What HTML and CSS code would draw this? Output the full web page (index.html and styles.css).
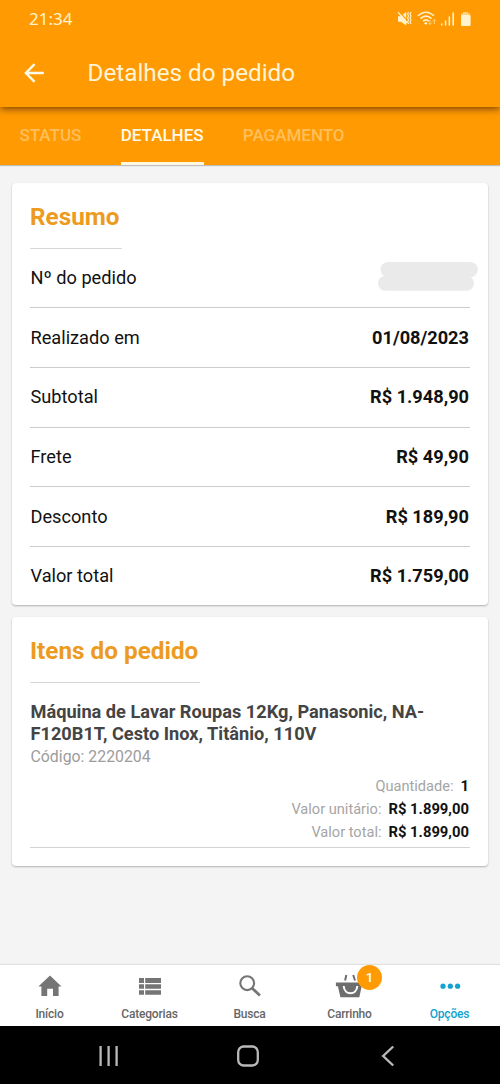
FILE: index.html
```html
<!DOCTYPE html>
<html lang="pt-BR">
<head>
<meta charset="utf-8">
<meta name="viewport" content="width=device-width, initial-scale=1">
<title>Detalhes do pedido</title>
<link rel="stylesheet" href="styles.css">
</head>
<body>
<div class="app">
  <header class="header">
    <div class="status">
      <span class="clock">21:34</span>
      <svg class="status-icons" width="76" height="18" viewBox="0 0 76 18">
        <g fill="#fff3cf">
          <path d="M2 6.2h2.5L10.2 2v13.5L5 11.8H2z"/>
          <path d="M3.4 1.6 11.4 10.6" stroke="#ff9a02" stroke-width="1.3"/>
          <path d="m2.2 2.4 9 10.6" stroke="#fff3cf" stroke-width="1.4"/>
          <path d="m12.6 2-1 2 1 2-1 2 1 2-1 2 1 2M15 2l-1 2 1 2-1 2 1 2-1 2 1 2" fill="none" stroke="#fff3cf" stroke-width="1.1"/>
          <path d="M22 5.8q8-7.2 16 0M24.5 8.6q5.5-5 11 0M27 11.2q3-2.7 6 0" fill="none" stroke="#fff3cf" stroke-width="1.5"/>
          <circle cx="29.8" cy="13.3" r="1.3"/>
          <path d="M34 10V14.5m-1.6-1.7L34 14.5l1.6-1.7M38.3 14V9.5m-1.6 1.7 1.6-1.7 1.6 1.7" fill="none" stroke="#ffd080" stroke-width="1"/>
          <path d="M45 13.5h1.5v2H45zM48.8 10.5h1.5v5h-1.5zM52.6 6.5h1.5v9h-1.5zM56.4 2.5h1.6v13h-1.6z"/>
          <path d="M67 2h5v1.5h2v2h-9v-2h2z" fill="#ffd27d"/>
          <rect x="65" y="5" width="9.6" height="11" rx="1.2"/>
        </g>
      </svg>
    </div>
    <div class="titlebar">
      <svg class="back" width="22" height="20" viewBox="0 0 22 20"><path d="M19.8 10H2.5M10.6 1.2 1.9 10l8.7 8.8" fill="none" stroke="#fffbea" stroke-width="2.4"/></svg>
      <h1 class="title">Detalhes do pedido</h1>
    </div>
  </header>
  <nav class="tabs">
    <span class="tab">STATUS</span>
    <span class="tab tab-active">DETALHES</span>
    <span class="tab">PAGAMENTO</span>
  </nav>

  <main class="content">
    <section class="card summary">
      <h2 class="heading">Resumo</h2>
      <div class="row"><span>Nº do pedido</span>
        <svg class="redacted" width="100" height="30" viewBox="0 0 100 30"><g fill="#eaeaea"><rect x="2.5" y="0" width="97.3" height="15.2" rx="7.6"/><rect x="0" y="13.8" width="96" height="15" rx="7.5"/><path d="M7 7h85v15H7z"/></g></svg>
      </div>
      <div class="row"><span>Realizado em</span><b>01/08/2023</b></div>
      <div class="row"><span>Subtotal</span><b>R$ 1.948,90</b></div>
      <div class="row"><span>Frete</span><b>R$ 49,90</b></div>
      <div class="row"><span>Desconto</span><b>R$ 189,90</b></div>
      <div class="row"><span>Valor total</span><b>R$ 1.759,00</b></div>
    </section>

    <section class="card items">
      <h2 class="heading">Itens do pedido</h2>
      <article class="item">
        <h3 class="item-name">Máquina de Lavar Roupas 12Kg, Panasonic, NA-F120B1T, Cesto Inox, Titânio, 110V</h3>
        <p class="code">Código: 2220204</p>
        <dl class="amounts">
          <div class="amount"><dt>Quantidade:</dt><dd>1</dd></div>
          <div class="amount"><dt>Valor unitário:</dt><dd>R$ 1.899,00</dd></div>
          <div class="amount"><dt>Valor total:</dt><dd>R$ 1.899,00</dd></div>
        </dl>
      </article>
    </section>
  </main>

  <nav class="bottom">
    <a class="link">
      <svg width="32" height="28" viewBox="0 0 32 28"><path d="M16 3.5 27.5 14.6H24.6V24H19V16.8H13.2V24H7.4V14.6H4.4z" fill="#757575"/></svg>
      <span>Início</span>
    </a>
    <a class="link">
      <svg width="32" height="28" viewBox="0 0 32 28"><path d="M5 6h5v5H5zM11.2 6H27v5H11.2zM5 12.2h5v4.6H5zM11.2 12.2H27v4.6H11.2zM5 18.2h5v4.6H5zM11.2 18.2H27v4.6H11.2z" fill="#757575"/></svg>
      <span>Categorias</span>
    </a>
    <a class="link">
      <svg width="32" height="28" viewBox="0 0 32 28"><g fill="none" stroke="#757575"><circle cx="13.2" cy="11.2" r="6.9" stroke-width="2.1"/><path d="m18.2 16.2 7.7 7.4" stroke-width="2.8"/></g></svg>
      <span>Busca</span>
    </a>
    <a class="link cart">
      <svg width="32" height="28" viewBox="0 0 32 28"><path d="M1.9 10.6h27v3.6h-1.2l-2.4 11H6.4l-2.5-11h-2z" fill="#6e6e6e"/><path d="M12.3 3 11.1 8.5M19.2 3l1.8 5.5" stroke="#6e6e6e" stroke-width="2"/><path d="M9.7 14c.7 9.7 12.9 9.7 13.6 0" fill="none" stroke="#fff" stroke-width="2.1"/></svg>
      <i class="badge">1</i>
      <span>Carrinho</span>
    </a>
    <a class="link link-active">
      <svg width="32" height="28" viewBox="0 0 32 28"><g fill="#12a3cf"><circle cx="9" cy="14.2" r="2.6"/><circle cx="16.3" cy="14.2" r="2.6"/><circle cx="23.6" cy="14.2" r="2.6"/></g></svg>
      <span>Opções</span>
    </a>
  </nav>

  <footer class="system">
    <svg width="22" height="22" viewBox="0 0 22 22"><path d="M2.6 1v20M10.6 1v20M18.6 1v20" stroke="#b9b9b9" stroke-width="2.3"/></svg>
    <svg width="22" height="22" viewBox="0 0 22 22"><rect x="1.2" y="1.5" width="19.6" height="19" rx="5.5" fill="none" stroke="#b9b9b9" stroke-width="2.3"/></svg>
    <svg width="14" height="22" viewBox="0 0 14 22"><path d="M12.2 1.5 2.2 11l10 9.5" fill="none" stroke="#b9b9b9" stroke-width="2.4"/></svg>
  </footer>
</div>
</body>
</html>
```
FILE: styles.css
```css
* { box-sizing: border-box; margin: 0; padding: 0; }
body { background: #f4f4f4; font-family: Roboto, "Liberation Sans", sans-serif; color: #111; }
svg { display: block; flex: none; }
.app { width: 500px; height: 1084px; display: flex; flex-direction: column; overflow: hidden; }

.header { height: 107px; flex: none; background: #ff9a02; box-shadow: 0 2px 7px rgba(80, 40, 0, .75); position: relative; z-index: 1; }
.status { height: 38px; padding: 0 28px 2px 29px; display: flex; align-items: center; justify-content: space-between; }
.clock { font-family: "Noto Sans", Roboto, sans-serif; font-size: 17px; color: #fff3cf; }
.status-icons { margin-top: 2px; }
.titlebar { height: 69px; padding: 0 24px; display: flex; align-items: center; gap: 41.5px; }
.title { font-size: 24.25px; font-weight: 400; line-height: 30px; color: #fff5d6; }

.tabs { height: 58px; flex: none; background: #ff9a02; padding: 0 19.5px; display: flex; gap: 39.3px; box-shadow: 0 1px 1px rgba(0, 0, 0, .22); font-size: 17px; font-weight: 500; line-height: 56px; color: #ffbf5c; }
.tab-active { color: #fffbe9; border-bottom: 3px solid #fff8e0; }

.content { flex: 1; padding: 18px 12px 0; display: flex; flex-direction: column; gap: 12px; }
.card { background: #fff; border-radius: 4px; padding: 0 18px; box-shadow: 0 1px 2px rgba(0, 0, 0, .28); }
.summary { height: 422px; }
.items { height: 249px; }
.heading { width: max-content; height: 65.5px; padding: 17px 2px 0 0; border-bottom: 1px solid #d8d8d8; font-size: 24.3px; font-weight: 700; line-height: 34px; color: #ed9b20; }
.row { height: 59.68px; border-bottom: 1px solid #ccc; display: flex; align-items: center; justify-content: space-between; font-size: 18.2px; line-height: 24px; }
.row:last-child { height: 58.6px; border-bottom: 0; }
.row span { padding-left: .5px; }
.row b { font-weight: 700; padding-right: 1px; }
.redacted { margin: -1px -8px 0 0; }

.item { height: 165px; border-bottom: 1px solid #d3d3d3; padding: 18px 1px 0 .5px; }
.item-name { font-size: 18.22px; font-weight: 700; line-height: 22px; color: #444; }
.code { font-size: 15.85px; line-height: 24px; color: #9c9c9c; }
.amounts { padding-top: 6.5px; font-size: 14.8px; line-height: 22.8px; }
.amount { display: flex; justify-content: flex-end; gap: 7px; }
.amount dt { color: #a5a5a5; font-size: 14.6px; }
.amount dd { font-weight: 700; }

.bottom { height: 60.5px; flex: none; background: #fff; box-shadow: 0 -1px 1px rgba(0, 0, 0, .08); display: grid; grid-template-columns: repeat(5, 100px); }
.link { position: relative; display: flex; flex-direction: column; align-items: center; padding: 6.5px 1px 0 0; font-size: 12px; letter-spacing: -.2px; line-height: 14px; font-weight: 500; color: #666; gap: 7px; }
.link-active { color: #12a3cf; }
.badge { position: absolute; left: 57px; top: 0; width: 25px; height: 25px; border-radius: 50%; background: #ff9a02; color: #fff; font-size: 13.5px; line-height: 24px; font-style: normal; text-align: center; }

.system { height: 58.5px; flex: none; background: #000; padding: 2px 105px 0 98px; display: flex; align-items: center; justify-content: space-between; }
.system svg:nth-child(2) { margin-right: 5px; }
```
